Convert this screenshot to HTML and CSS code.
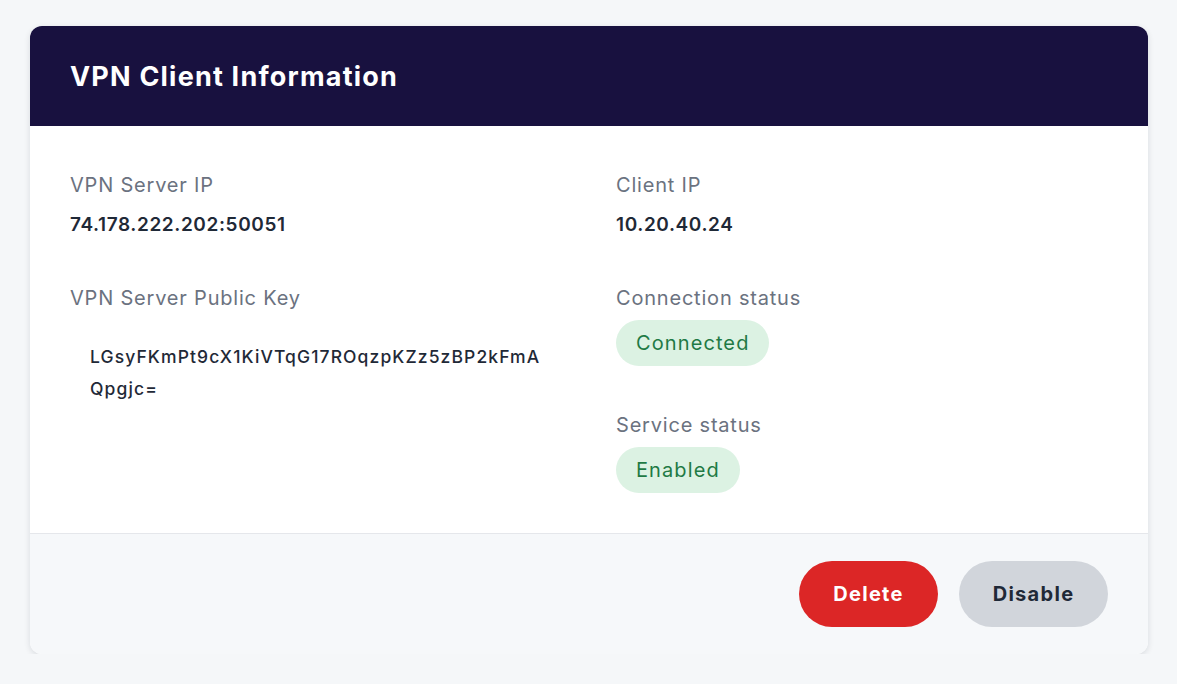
FILE: index.html
```html
<!DOCTYPE html>
<html lang="en">
<head>
<meta charset="utf-8">
<title>VPN Client Information</title>
<link rel="stylesheet" href="styles.css">
</head>
<body>
<div class="card">
  <div class="card-header">
    <h1 class="title">VPN Client Information</h1>
  </div>
  <div class="card-body">
    <div class="col">
      <div class="field">
        <div class="label">VPN Server IP</div>
        <div class="value">74.178.222.202:50051</div>
      </div>
      <div class="field">
        <div class="label">VPN Server Public Key</div>
        <div class="key">LGsyFKmPt9cX1KiVTqG17ROqzpKZz5zBP2kFmA<br>Qpgjc=</div>
      </div>
    </div>
    <div class="col">
      <div class="field">
        <div class="label">Client IP</div>
        <div class="value">10.20.40.24</div>
      </div>
      <div class="field">
        <div class="label">Connection status</div>
        <span class="badge">Connected</span>
      </div>
      <div class="field">
        <div class="label">Service status</div>
        <span class="badge">Enabled</span>
      </div>
    </div>
  </div>
  <div class="card-footer">
    <button class="btn btn-delete">Delete</button>
    <button class="btn btn-disable">Disable</button>
  </div>
</div>
</body>
</html>
```
FILE: styles.css
```css
* { box-sizing: border-box; }
html, body { margin: 0; }
body {
  background: #f5f7f9;
  padding: 26px 29px 0 30px;
  font-family: Inter, "Noto Sans", "Liberation Sans", sans-serif;
  color: #1f2937;
}
.card {
  background: #ffffff;
  border-radius: 12px;
  box-shadow: 0 2px 6px rgba(15, 23, 42, 0.12);
  overflow: hidden;
}
.card-header {
  background: #18113f;
  height: 100px;
  display: flex;
  align-items: center;
  padding: 0 40px;
}
.title {
  margin: 0;
  color: #ffffff;
  font-size: 27px;
  font-weight: 700;
  letter-spacing: 1.2px;
}
.card-body {
  display: grid;
  grid-template-columns: 1fr 1fr;
  column-gap: 54px;
  padding: 45px 40px 40px;
}
.col {
  display: flex;
  flex-direction: column;
  gap: 45px;
}
.field {
  display: flex;
  flex-direction: column;
  align-items: flex-start;
}
.label {
  font-size: 20px;
  line-height: 28px;
  color: #6b7280;
  letter-spacing: 0.8px;
}
.value {
  margin-top: 12px;
  font-size: 19px;
  line-height: 28px;
  font-weight: 600;
  color: #1f2937;
  letter-spacing: 0.6px;
}
.key {
  margin-top: 29px;
  padding-left: 20px;
  font-size: 17.5px;
  line-height: 32px;
  font-weight: 500;
  color: #1f2937;
  letter-spacing: 1.1px;
}
.badge {
  margin-top: 8px;
  display: inline-flex;
  align-items: center;
  height: 46px;
  padding: 0 20px;
  border-radius: 23px;
  background: #dcf2e3;
  color: #1f7a45;
  font-size: 20px;
  letter-spacing: 1.1px;
}
.card-footer {
  background: #f6f8fa;
  border-top: 1px solid #e5e7eb;
  display: flex;
  justify-content: flex-end;
  gap: 21px;
  padding: 27px 40px 27px;
}
.btn {
  height: 66px;
  border: none;
  border-radius: 33px;
  font-family: inherit;
  font-size: 20px;
  font-weight: 700;
  letter-spacing: 1.3px;
  cursor: pointer;
}
.btn-delete {
  width: 139px;
  background: #dc2626;
  color: #ffffff;
}
.btn-disable {
  width: 149px;
  background: #d1d5db;
  color: #1f2937;
}
```
